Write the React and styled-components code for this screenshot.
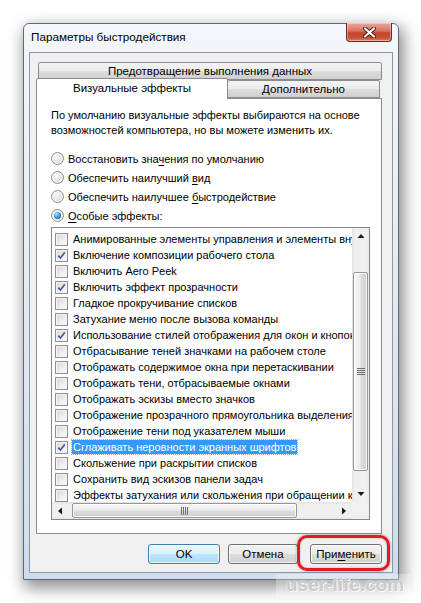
import React from 'react';
import styled, { createGlobalStyle } from 'styled-components';

const GlobalStyle = createGlobalStyle`
  html, body {
    margin: 0;
    padding: 0;
    background: #ffffff;
  }
  body {
    font-family: "Liberation Sans", Arial, sans-serif;
    font-size: 11px;
    color: #000;
  }
`;

const Page = styled.div`
  position: relative;
  width: 421px;
  height: 603px;
  box-sizing: border-box;
  padding: 23px 0 0 23px;
  overflow: hidden;
`;

const Window = styled.div`
  width: 376px;
  height: 557px;
  box-sizing: border-box;
  display: flex;
  flex-direction: column;
  padding: 0 5px 6px 5px;
  border: 1px solid #5d6874;
  border-radius: 6px 6px 0 0;
  background: linear-gradient(to bottom, #f4f6f9 0%, #e6edf4 40%, #cfdceb 100%);
  box-shadow: 3px 6px 16px 2px rgba(0, 0, 0, 0.45);
`;

const TitleBar = styled.div`
  height: 28px;
  display: flex;
  justify-content: space-between;
  align-items: flex-start;
`;

const Title = styled.div`
  padding: 5px 0 0 2px;
  line-height: 16px;
  font-size: 11.7px;
  color: #000;
`;

const CloseButton = styled.div`
  width: 46px;
  height: 19px;
  margin: -1px 1px 0 0;
  box-sizing: border-box;
  display: flex;
  align-items: center;
  justify-content: center;
  border: 1px solid #6b2a22;
  border-top: none;
  border-radius: 0 0 4px 4px;
  background: linear-gradient(to bottom, #e9a99c 0%, #d5735f 45%, #c2452d 55%, #c9533a 85%, #dc8a6f 100%);
  box-shadow: inset 0 0 0 1px rgba(255, 255, 255, 0.35);
`;

const Client = styled.div`
  flex: 1;
  min-height: 0;
  display: flex;
  flex-direction: column;
  box-sizing: border-box;
  padding: 9px 10px 8px 6px;
  border: 1px solid #8d97a3;
  background: #f0f0f0;
`;

const TabControl = styled.div`
  flex: 1;
  min-height: 0;
  display: flex;
  flex-direction: column;
`;

const TabRow = styled.div`
  height: 18px;
  flex-shrink: 0;
  display: flex;
  align-items: flex-end;
  padding: ${p => (p.$back ? '0 0 0 2px' : '0')};
`;

const Tab = styled.div`
  position: relative;
  z-index: ${p => (p.$active ? 2 : 1)};
  box-sizing: border-box;
  width: ${p => p.$width};
  height: ${p => (p.$active ? '21px' : '18px')};
  margin-bottom: ${p => (p.$active ? '-1px' : '0')};
  border: 1px solid #898c95;
  border-bottom: ${p => (p.$active ? 'none' : '1px solid #898c95')};
  border-left: ${p => (p.$joined ? 'none' : '1px solid #898c95')};
  border-radius: 2px 2px 0 0;
  background: ${p =>
    p.$active
      ? '#ffffff'
      : 'linear-gradient(to bottom, #f3f3f3 0%, #ebebeb 50%, #dddddd 51%, #cfcfcf 100%)'};
  text-align: center;
  font-size: 11.5px;
  line-height: ${p => (p.$active ? '18px' : '17px')};
  white-space: nowrap;
`;

const Panel = styled.div`
  flex: 1;
  min-height: 0;
  display: flex;
  flex-direction: column;
  box-sizing: border-box;
  padding: 9px 11px 13px 14px;
  border: 1px solid #898c95;
  background: #ffffff;
`;

const Description = styled.p`
  margin: 0;
  line-height: 15px;
  white-space: nowrap;
`;

const RadioGroup = styled.div`
  margin-top: 11px;
  display: flex;
  flex-direction: column;
`;

const RadioRow = styled.div`
  height: 19px;
  display: flex;
  align-items: center;
  gap: 4px;
`;

const RadioCircle = styled.span`
  position: relative;
  width: 13px;
  height: 13px;
  box-sizing: border-box;
  border-radius: 50%;
  border: 1px solid #8e8f8f;
  background: radial-gradient(circle at 40% 35%, #f8f8f8 0%, #e4e4e4 55%, #cfcfcf 100%);
  box-shadow: inset 0 0 0 1px #f6f6f6;
  flex-shrink: 0;

  &::after {
    content: '';
    display: ${p => (p.$checked ? 'block' : 'none')};
    position: absolute;
    left: 2px;
    top: 2px;
    width: 7px;
    height: 7px;
    border-radius: 50%;
    background: radial-gradient(circle at 35% 30%, #b8e6ff 0%, #3d9be0 45%, #0f4f8f 100%);
  }
`;

const Mnemonic = styled.span`
  text-decoration: underline;
  text-underline-offset: 2px;
`;

const ListBox = styled.div`
  flex: 1;
  min-height: 0;
  margin-top: 2px;
  display: grid;
  grid-template-columns: 1fr 17px;
  grid-template-rows: 1fr 17px;
  border: 1px solid #828790;
  background: #ffffff;
  overflow: hidden;
`;

const Items = styled.div`
  padding-top: 3px;
  overflow: hidden;
  min-height: 0;
`;

const ItemRow = styled.div`
  height: 16px;
  display: flex;
  align-items: center;
  padding-left: 3px;
  white-space: nowrap;
`;

const CheckBox = styled.span`
  width: 13px;
  height: 13px;
  box-sizing: border-box;
  margin-right: 4px;
  flex-shrink: 0;
  display: flex;
  align-items: center;
  justify-content: center;
  border: 1px solid #8e8f8f;
  background: linear-gradient(135deg, #d6d6d6 0%, #eeeeee 60%, #fbfbfb 100%);
  box-shadow: inset 0 0 0 1px #f4f4f4;
`;

const ItemLabel = styled.span`
  padding: 0 1px;
  line-height: 14px;
  color: ${p => (p.$selected ? '#ffffff' : '#000000')};
  background: ${p => (p.$selected ? '#3399ff' : 'transparent')};
  outline: ${p => (p.$selected ? '1px dotted #e9a23b' : 'none')};
`;

const VScroll = styled.div`
  display: flex;
  flex-direction: column;
  min-height: 0;
  background: linear-gradient(to right, #e2e2e2 0%, #efefef 15%, #f0f0f0 85%, #e6e6e6 100%);
`;

const HScroll = styled.div`
  display: flex;
  background: linear-gradient(to bottom, #e2e2e2 0%, #efefef 15%, #f0f0f0 85%, #e6e6e6 100%);
`;

const Corner = styled.div`
  background: #f0f0f0;
`;

const ArrowButton = styled.div`
  flex: 0 0 17px;
  display: flex;
  align-items: center;
  justify-content: center;
`;

const Track = styled.div`
  flex: 1;
  min-height: 0;
  display: flex;
  flex-direction: ${p => (p.$vertical ? 'column' : 'row')};
`;

const Thumb = styled.div`
  box-sizing: border-box;
  flex-shrink: 0;
  display: flex;
  align-items: center;
  justify-content: center;
  border: 1px solid #979797;
  border-radius: 2px;
  ${p =>
    p.$vertical
      ? `
    margin: ${p.$offset}px 1px 0 1px;
    height: ${p.$size}px;
    background: linear-gradient(to right, #f6f6f6 0%, #ececec 45%, #dcdcdc 55%, #cfcfcf 100%);
  `
      : `
    margin: 1px 0 1px ${p.$offset}px;
    width: ${p.$size}px;
    background: linear-gradient(to bottom, #f6f6f6 0%, #ececec 45%, #dcdcdc 55%, #cfcfcf 100%);
  `}
  box-shadow: inset 0 0 0 1px rgba(255, 255, 255, 0.8);
`;

const ButtonRow = styled.div`
  margin-top: 10px;
  flex-shrink: 0;
  display: flex;
  justify-content: flex-end;
  align-items: center;
`;

const PushButton = styled.div`
  position: relative;
  width: ${p => p.$width || 72}px;
  height: 20px;
  margin-left: ${p => p.$gap || 0}px;
  box-sizing: border-box;
  display: flex;
  align-items: center;
  justify-content: center;
  font-size: 11.5px;
  border: 1px solid ${p => (p.$default ? '#3c7fb1' : '#707070')};
  border-radius: 3px;
  background: ${p =>
    p.$default
      ? 'linear-gradient(to bottom, #eaf6fd 0%, #d9f0fc 50%, #bee6fd 51%, #a7d9f5 100%)'
      : 'linear-gradient(to bottom, #f2f2f2 0%, #ebebeb 50%, #dddddd 51%, #cfcfcf 100%)'};
  box-shadow: inset 0 0 0 1px rgba(255, 255, 255, 0.75);
`;

const HighlightRing = styled.div`
  position: absolute;
  left: -14px;
  right: -9px;
  top: -10px;
  bottom: -8px;
  border: 3px solid #e21b22;
  border-radius: 10px;
  box-shadow: 0 0 3px rgba(0, 0, 0, 0.35), inset 0 0 2px rgba(0, 0, 0, 0.3);
  pointer-events: none;
`;

const Watermark = styled.div`
  position: absolute;
  left: 276px;
  top: 574px;
  width: 134px;
  height: 24px;
  box-sizing: border-box;
  padding: 0 0 0 10px;
  background: rgba(255, 255, 255, 0.3);
  font-family: "Liberation Sans", Arial, sans-serif;
  font-weight: bold;
  font-size: 19px;
  line-height: 22px;
  color: rgba(196, 196, 196, 0.9);
  text-shadow: 0 0 2px #ffffff, 1px 1px 0 rgba(255, 255, 255, 0.8);
  white-space: nowrap;
`;

const effects = [
  { text: 'Анимированные элементы управления и элементы внутри окна', checked: false },
  { text: 'Включение композиции рабочего стола', checked: true },
  { text: 'Включить Aero Peek', checked: false },
  { text: 'Включить эффект прозрачности', checked: true },
  { text: 'Гладкое прокручивание списков', checked: false },
  { text: 'Затухание меню после вызова команды', checked: false },
  { text: 'Использование стилей отображения для окон и кнопок', checked: true },
  { text: 'Отбрасывание теней значками на рабочем столе', checked: false },
  { text: 'Отображать содержимое окна при перетаскивании', checked: false },
  { text: 'Отображать тени, отбрасываемые окнами', checked: false },
  { text: 'Отображать эскизы вместо значков', checked: false },
  { text: 'Отображение прозрачного прямоугольника выделения', checked: false },
  { text: 'Отображение тени под указателем мыши', checked: false },
  { text: 'Сглаживать неровности экранных шрифтов', checked: true, selected: true },
  { text: 'Скольжение при раскрытии списков', checked: false },
  { text: 'Сохранить вид эскизов панели задач', checked: false },
  { text: 'Эффекты затухания или скольжения при обращении к меню', checked: false },
];

const radios = [
  { before: 'Восстановить зна', key: 'ч', after: 'ения по умолчанию' },
  { before: 'Обеспечить наилучший ', key: 'в', after: 'ид' },
  { before: 'Обеспечить наилучшее ', key: 'б', after: 'ыстродействие' },
  { before: '', key: 'О', after: 'собые эффекты:', checked: true },
];

const CloseIcon = () => (
  <svg width="13" height="11" viewBox="0 0 13 11">
    <path d="M2 1.5 L11 9.5 M11 1.5 L2 9.5" stroke="#4a1a14" strokeWidth="4" strokeLinecap="round" />
    <path d="M2 1.5 L11 9.5 M11 1.5 L2 9.5" stroke="#ffffff" strokeWidth="2.2" strokeLinecap="round" />
  </svg>
);

const CheckMark = () => (
  <svg width="9" height="9" viewBox="0 0 9 9">
    <path d="M1.2 4.6 L3.4 7 L7.8 1.4" fill="none" stroke="#4b5f94" strokeWidth="1.7" />
  </svg>
);

const Arrow = ({ dir }) => {
  const shapes = {
    up: '0.5,5 7.5,5 4,1',
    down: '0.5,2 7.5,2 4,6',
    left: '5,0.5 5,7.5 1,4',
    right: '2,0.5 2,7.5 6,4',
  };
  return (
    <svg width="8" height="8" viewBox="0 0 8 8">
      <polygon points={shapes[dir]} fill="#1a1a1a" />
    </svg>
  );
};

const Grip = ({ vertical }) =>
  vertical ? (
    <svg width="8" height="7" viewBox="0 0 8 7">
      {[0.5, 2.5, 4.5, 6.5].map(y => (
        <line key={y} x1="0" x2="8" y1={y} y2={y} stroke="#6e6e6e" strokeWidth="1" />
      ))}
    </svg>
  ) : (
    <svg width="7" height="8" viewBox="0 0 7 8">
      {[0.5, 2.5, 4.5, 6.5].map(x => (
        <line key={x} y1="0" y2="8" x1={x} x2={x} stroke="#6e6e6e" strokeWidth="1" />
      ))}
    </svg>
  );

export default function App() {
  return (
    <Page>
      <GlobalStyle />
      <Window>
        <TitleBar>
          <Title>Параметры быстродействия</Title>
          <CloseButton>
            <CloseIcon />
          </CloseButton>
        </TitleBar>

        <Client>
          <TabControl>
            <TabRow $back>
              <Tab $width="344px">Предотвращение выполнения данных</Tab>
            </TabRow>
            <TabRow>
              <Tab $width="192px" $active>Визуальные эффекты</Tab>
              <Tab $width="152px" $joined>Дополнительно</Tab>
            </TabRow>

            <Panel>
              <Description>
                По умолчанию визуальные эффекты выбираются на основе
                <br />
                возможностей компьютера, но вы можете изменить их.
              </Description>

              <RadioGroup>
                {radios.map((r, i) => (
                  <RadioRow key={i}>
                    <RadioCircle $checked={r.checked} />
                    <span>
                      {r.before}
                      <Mnemonic>{r.key}</Mnemonic>
                      {r.after}
                    </span>
                  </RadioRow>
                ))}
              </RadioGroup>

              <ListBox>
                <Items>
                  {effects.map((e, i) => (
                    <ItemRow key={i}>
                      <CheckBox>{e.checked && <CheckMark />}</CheckBox>
                      <ItemLabel $selected={e.selected}>{e.text}</ItemLabel>
                    </ItemRow>
                  ))}
                </Items>
                <VScroll>
                  <ArrowButton>
                    <Arrow dir="up" />
                  </ArrowButton>
                  <Track $vertical>
                    <Thumb $vertical $offset={27} $size={199}>
                      <Grip vertical />
                    </Thumb>
                  </Track>
                  <ArrowButton>
                    <Arrow dir="down" />
                  </ArrowButton>
                </VScroll>
                <HScroll>
                  <ArrowButton>
                    <Arrow dir="left" />
                  </ArrowButton>
                  <Track>
                    <Thumb $offset={3} $size={225}>
                      <Grip />
                    </Thumb>
                  </Track>
                  <ArrowButton>
                    <Arrow dir="right" />
                  </ArrowButton>
                </HScroll>
                <Corner />
              </ListBox>
            </Panel>
          </TabControl>

          <ButtonRow>
            <PushButton $default>OK</PushButton>
            <PushButton $gap={8} $width={70}>Отмена</PushButton>
            <PushButton $gap={12}>
              <span>
                При<Mnemonic>м</Mnemonic>енить
              </span>
              <HighlightRing />
            </PushButton>
          </ButtonRow>
        </Client>
      </Window>
      <Watermark>user-life.com</Watermark>
    </Page>
  );
}
